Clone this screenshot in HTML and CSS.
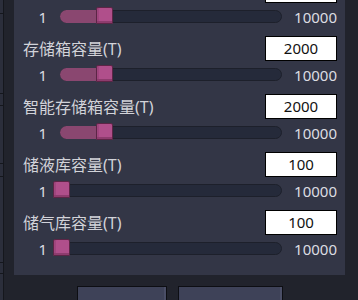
FILE: index.html
```html
<!DOCTYPE html>
<html>
<head>
<meta charset="utf-8">
<link rel="stylesheet" href="styles.css">
</head>
<body>
<div class="layout">
  <div class="edge">
    <div class="seg" style="height:13px"></div>
    <div class="seg" style="height:79px"></div>
    <div class="seg" style="height:11px"></div>
    <div class="seg" style="height:57px"></div>
    <div class="seg" style="height:12px"></div>
    <div class="seg" style="height:85px"></div>
    <div class="seg" style="height:10px"></div>
  </div>
  <div class="main">
    <div class="panel">
      <div class="row">
        <div class="head"><span class="label"></span><div class="input"></div></div>
        <div class="slide"><span class="min">1</span><div class="track"><div class="fill" style="width:44px"></div><div class="handle" style="left:35px"></div></div><span class="max">10000</span></div>
      </div>
      <div class="row">
        <div class="head"><span class="label">存储箱容量(T)</span><div class="input">2000</div></div>
        <div class="slide"><span class="min">1</span><div class="track"><div class="fill" style="width:44px"></div><div class="handle" style="left:35px"></div></div><span class="max">10000</span></div>
      </div>
      <div class="row">
        <div class="head"><span class="label">智能存储箱容量(T)</span><div class="input">2000</div></div>
        <div class="slide"><span class="min">1</span><div class="track"><div class="fill" style="width:44px"></div><div class="handle" style="left:35px"></div></div><span class="max">10000</span></div>
      </div>
      <div class="row">
        <div class="head"><span class="label">储液库容量(T)</span><div class="input">100</div></div>
        <div class="slide"><span class="min">1</span><div class="track"><div class="handle" style="left:-8px"></div></div><span class="max">10000</span></div>
      </div>
      <div class="row">
        <div class="head"><span class="label">储气库容量(T)</span><div class="input">100</div></div>
        <div class="slide"><span class="min">1</span><div class="track"><div class="handle" style="left:-8px"></div></div><span class="max">10000</span></div>
      </div>
    </div>
    <div class="buttons">
      <div class="btn b1"></div>
      <div class="btn b2"></div>
    </div>
  </div>
</div>
</body>
</html>
```
FILE: styles.css
```css
html, body {
  margin: 0;
  padding: 0;
}
body {
  width: 358px;
  height: 300px;
  overflow: hidden;
  background: #21232c;
  font-family: "Noto Sans", "Noto Sans CJK SC", sans-serif;
}
.layout {
  display: flex;
  align-items: flex-start;
}
.edge {
  width: 3px;
  height: 300px;
  background: #2b2e3b;
  border-right: 1px solid #15171d;
  display: flex;
  flex-direction: column;
}
.seg {
  border-bottom: 1px solid #15171d;
  flex: none;
}
.main {
  margin-left: 10px;
  width: 331px;
}
.panel {
  margin-top: -30px;
  background: #333646;
  padding: 8px 8px 13px 9px;
  display: flex;
  flex-direction: column;
  gap: 6px;
}
.row {
  display: flex;
  flex-direction: column;
}
.head {
  height: 25px;
  display: flex;
  align-items: center;
  justify-content: space-between;
}
.label {
  color: #d2d3d9;
  font-size: 16px;
  line-height: 20px;
}
.input {
  width: 70px;
  height: 23px;
  background: #ffffff;
  border: 1px solid #000000;
  color: #111;
  font-size: 15px;
  line-height: 23px;
  text-align: center;
}
.slide {
  height: 27px;
  display: flex;
  align-items: center;
}
.min {
  width: 24px;
  text-align: right;
  color: #dcdde2;
  font-size: 15px;
  line-height: 20px;
}
.track {
  position: relative;
  margin-left: 13px;
  width: 220px;
  height: 11px;
  background: #252a3a;
  border: 1px solid #1d202b;
  border-radius: 7px;
}
.fill {
  position: absolute;
  left: -1px;
  top: -1px;
  height: 13px;
  background: #8a4770;
  border-radius: 7px 0 0 7px;
}
.handle {
  position: absolute;
  top: -4px;
  width: 15px;
  height: 15px;
  background: #b04f8b;
  border: 1px solid #5c2546;
  border-radius: 2px 2px 1px 1px;
  box-shadow: inset 0 -2px 0 #8e3c6e, inset 2px 0 0 #a0467e;
}
.max {
  margin-left: auto;
  color: #dcdde2;
  font-size: 15px;
  line-height: 20px;
}
.buttons {
  display: flex;
  margin-top: 11px;
  padding-left: 63px;
  gap: 11px;
}
.btn {
  height: 30px;
  background: #3e4258;
  border: 1px solid #0d0e13;
  box-shadow: inset -2px 0 0 #4a4e66;
}
.b1 { width: 88px; }
.b2 { width: 103px; }
```
